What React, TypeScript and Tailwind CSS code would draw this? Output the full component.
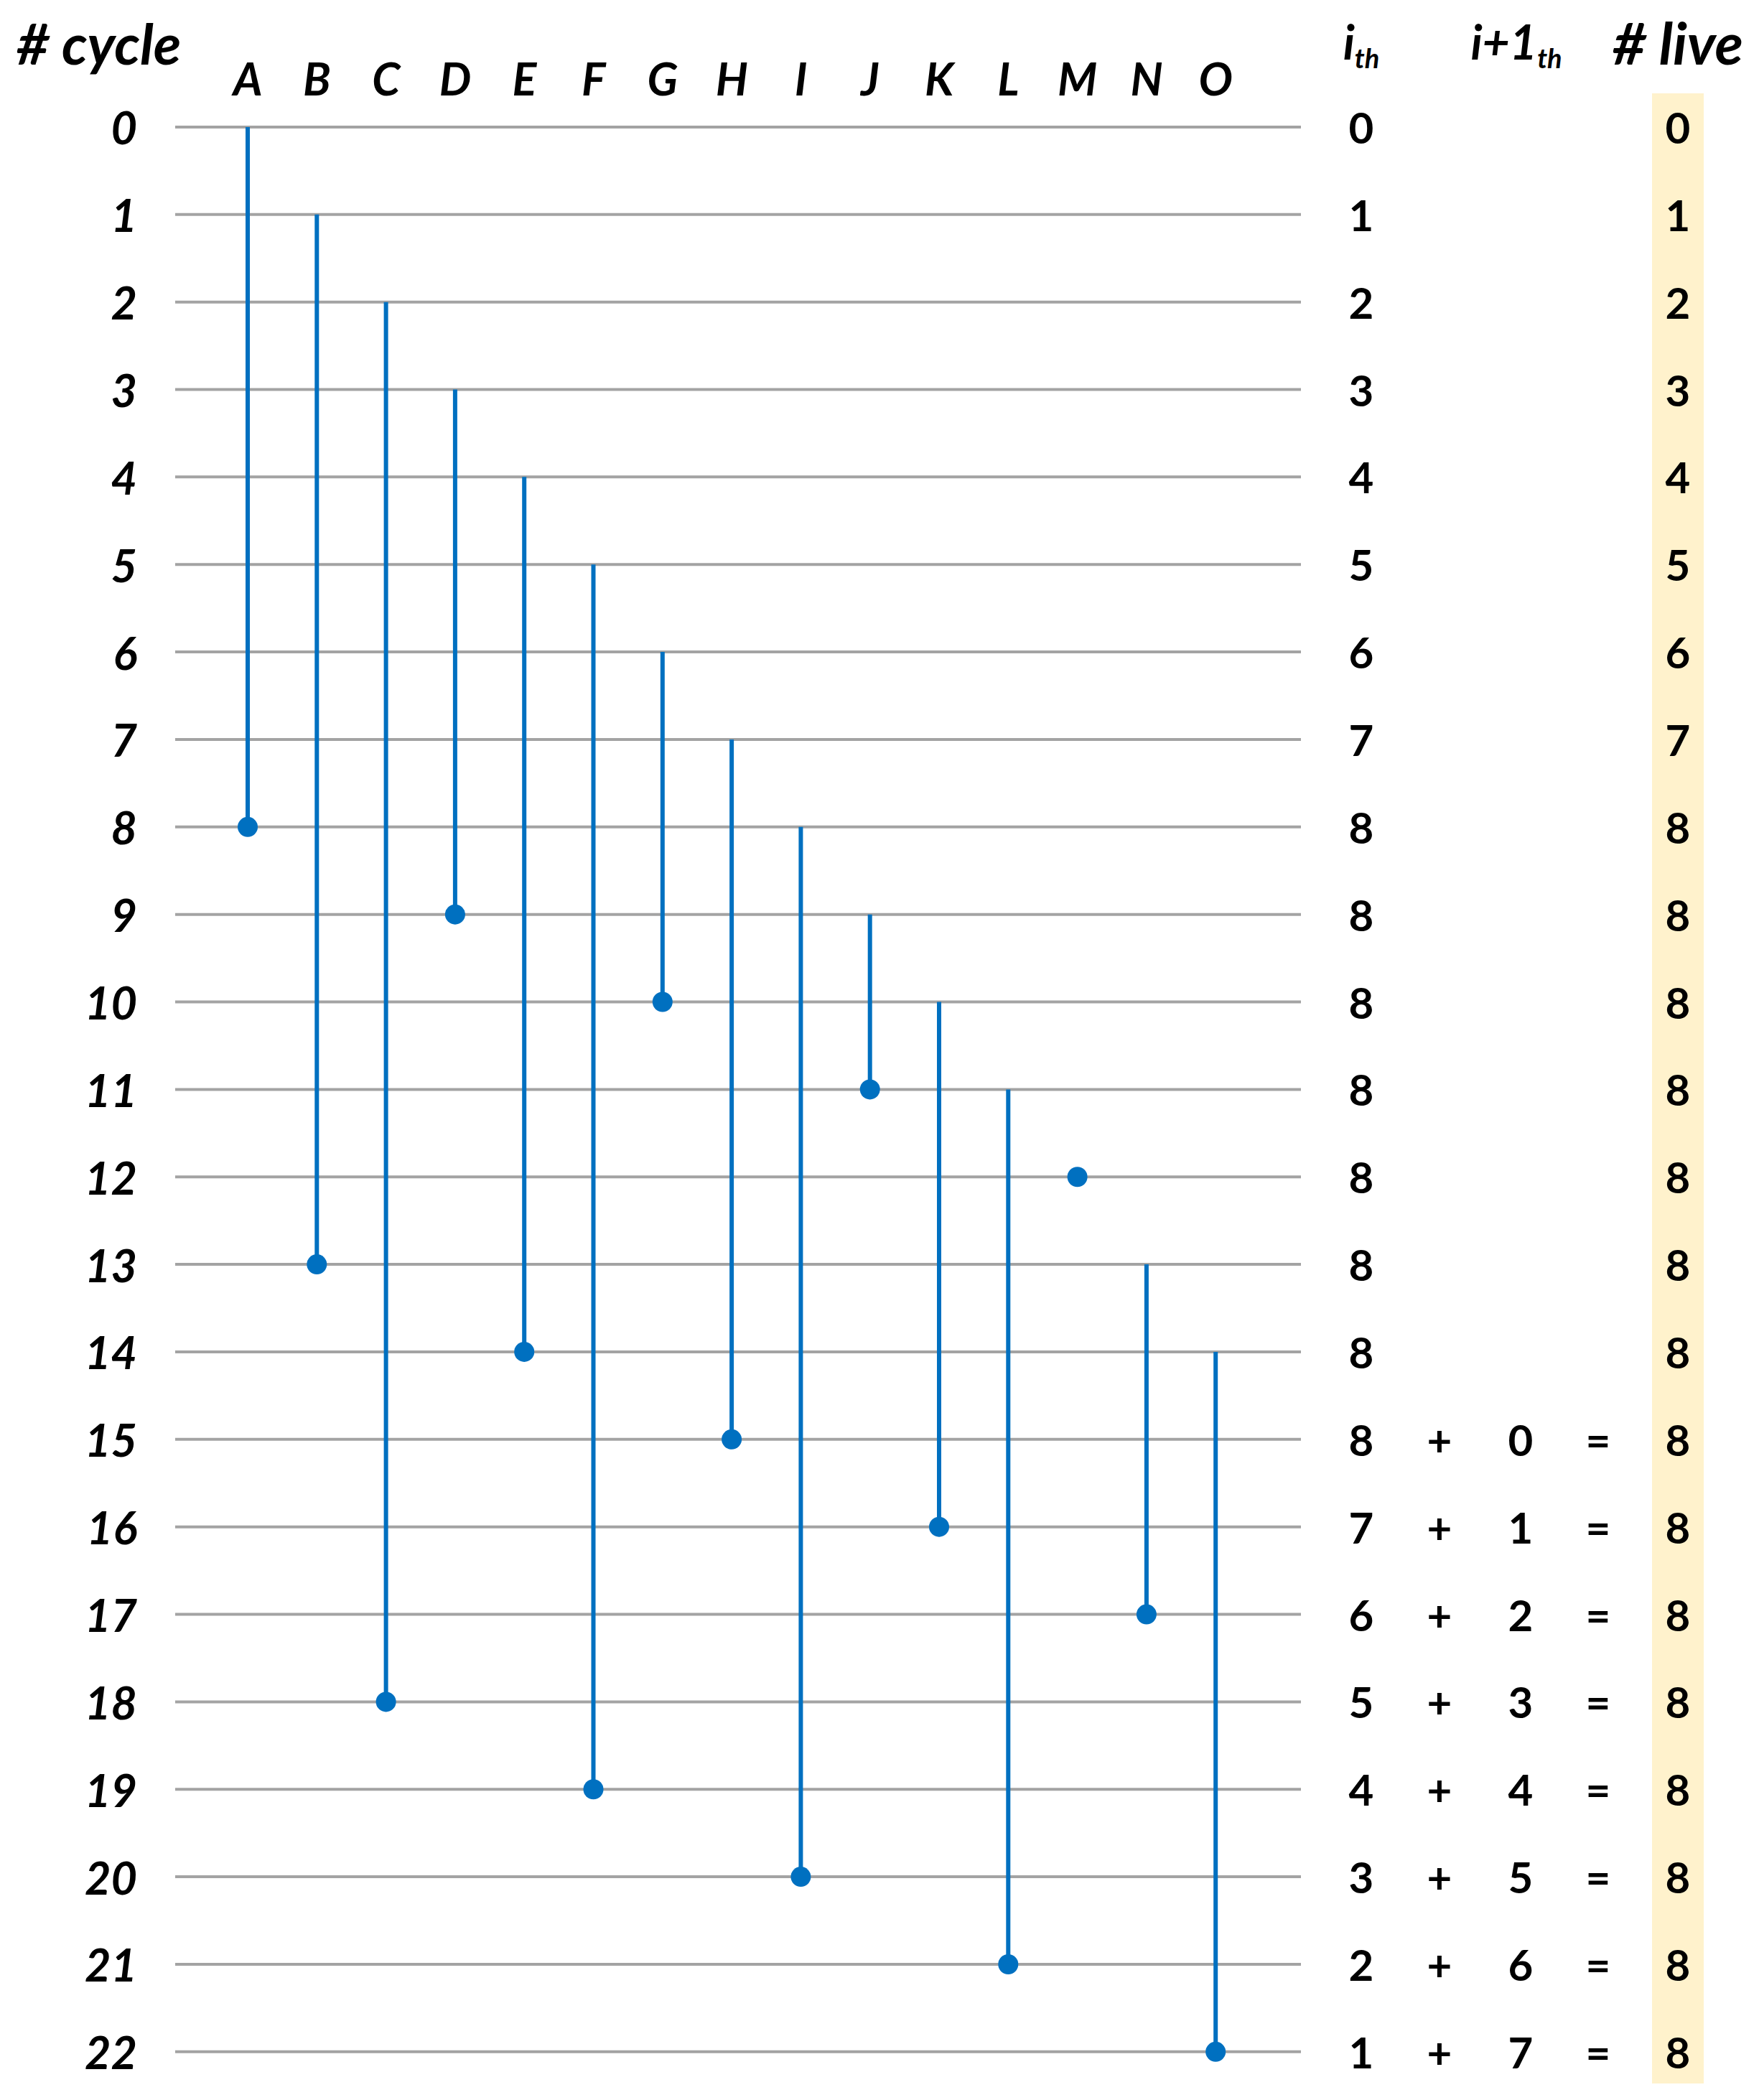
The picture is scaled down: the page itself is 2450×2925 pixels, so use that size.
import React from 'react';

// column letters and their [start cycle, end cycle]
const LETTERS = 'ABCDEFGHIJKLMNO'.split('');
const SPANS: [number, number][] = [
  [0, 8], [1, 13], [2, 18], [3, 9], [4, 14], [5, 19], [6, 10], [7, 15],
  [8, 20], [9, 11], [10, 16], [11, 21], [12, 12], [13, 17], [14, 22],
];

const ROW_H = 121.86;
const COL_X0 = 101;
const COL_W = 96.3;
const CHART_W = 1570;
const ROWS = Array.from({ length: 23 }, (_, i) => i);

const ith = (r: number) => (r <= 7 ? r : r <= 15 ? 8 : 23 - r);
const nextTh = (r: number) => (r >= 15 ? r - 15 : null);
const live = (r: number) => Math.min(r, 8);

const Chart: React.FC = () => {
  const h = ROW_H * ROWS.length;
  const y = (r: number) => ROW_H / 2 + r * ROW_H;
  return (
    <svg width={CHART_W} height={h} viewBox={`0 0 ${CHART_W} ${h}`} className="block shrink-0">
      {ROWS.map((r) => (
        <line key={r} x1={0} x2={1568} y1={y(r)} y2={y(r)} stroke="#a3a3a3" strokeWidth={4} />
      ))}
      {SPANS.map(([s, e], i) => {
        const x = COL_X0 + i * COL_W;
        return (
          <g key={i}>
            {e > s && <line x1={x} x2={x} y1={y(s)} y2={y(e)} stroke="#0070C0" strokeWidth={6} />}
            <circle cx={x} cy={y(e)} r={14} fill="#0070C0" />
          </g>
        );
      })}
    </svg>
  );
};

const Cell: React.FC<{ children?: React.ReactNode }> = ({ children }) => (
  <div className="h-[121.86px] flex items-center justify-center leading-none">{children}</div>
);

export default function App() {
  return (
    <div className="w-[2450px] h-[2925px] bg-white overflow-hidden text-black font-['Lato','Open_Sans',sans-serif]">
      {/* header row */}
      <div className="flex h-[116px]">
        <div className="w-[244px] shrink-0 pl-[23px] pt-[20px] text-[79px] leading-none font-bold italic whitespace-nowrap">
          # cycle
        </div>
        <div className="w-[1570px] shrink-0 flex pl-[53px] pt-[77px]">
          {LETTERS.map((l) => (
            <div key={l} className="w-[96.3px] text-center text-[63px] leading-none font-bold italic">
              {l}
            </div>
          ))}
        </div>
        <div className="w-[28px] shrink-0" />
        <div className="w-[108px] shrink-0 flex justify-center pt-[25px] text-[66px] leading-none font-bold italic whitespace-nowrap">
          <span>
            i<sub className="text-[38px] -bottom-3">th</sub>
          </span>
        </div>
        <div className="w-[110px] shrink-0" />
        <div className="w-[116px] shrink-0 flex justify-center pt-[25px] text-[66px] leading-none font-bold italic whitespace-nowrap">
          <span className="-ml-[12px]">
            i+1<sub className="text-[38px] -bottom-3">th</sub>
          </span>
        </div>
        <div className="w-[100px] shrink-0" />
        <div className="w-[25px] shrink-0" />
        <div className="w-[72px] shrink-0 flex justify-center pt-[18px] text-[81px] leading-none font-bold italic whitespace-nowrap">
          # live
        </div>
      </div>

      {/* body */}
      <div className="flex">
        <div className="w-[244px] shrink-0 flex flex-col">
          {ROWS.map((r) => (
            <div key={r} className="h-[121.86px] flex items-center justify-end pr-[53px] text-[63px] leading-none font-bold italic">
              {r}
            </div>
          ))}
        </div>
        <Chart />
        <div className="w-[28px] shrink-0" />
        <div className="w-[108px] shrink-0 text-[60px] font-bold">
          {ROWS.map((r) => <Cell key={r}>{ith(r)}</Cell>)}
        </div>
        <div className="w-[110px] shrink-0 text-[60px] font-bold">
          {ROWS.map((r) => <Cell key={r}>{nextTh(r) !== null ? '+' : ''}</Cell>)}
        </div>
        <div className="w-[116px] shrink-0 text-[60px] font-bold">
          {ROWS.map((r) => <Cell key={r}>{nextTh(r)}</Cell>)}
        </div>
        <div className="w-[100px] shrink-0 text-[60px] font-bold">
          {ROWS.map((r) => <Cell key={r}>{nextTh(r) !== null ? '=' : ''}</Cell>)}
        </div>
        <div className="w-[25px] shrink-0" />
        <div className="w-[72px] shrink-0 text-[60px] font-bold">
          <div className="mt-[14px] h-[2772px] bg-[#FFF2CC] flex flex-col">
            <div className="-mt-[14px]">
              {ROWS.map((r) => <Cell key={r}>{live(r)}</Cell>)}
            </div>
          </div>
        </div>
      </div>
    </div>
  );
}
